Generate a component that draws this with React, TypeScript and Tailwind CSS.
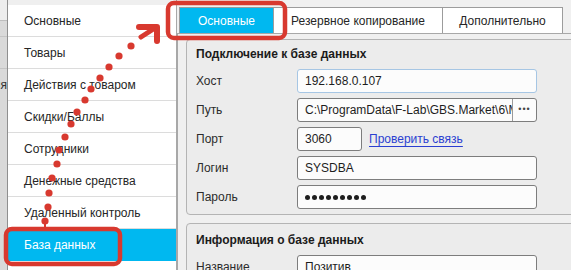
import React from 'react';

const menu = [
  'Основные',
  'Товары',
  'Действия с товаром',
  'Скидки/Баллы',
  'Сотрудники',
  'Денежные средства',
  'Удаленный контроль',
  'База данных',
];

const dots: [number, number][] = [
  [45, 221], [48, 207], [49, 193], [52, 178], [57, 164], [59, 150], [65, 137],
  [71, 124], [77, 112], [85, 100], [91, 89], [100, 78], [109, 67], [119, 56], [131, 46],
];

function Field({ label, children }: { label: string; children: React.ReactNode }) {
  return (
    <div className="flex items-center h-[24px] whitespace-nowrap">
      <div className="w-[101px] shrink-0 text-[12px] text-[#2b2b2b]">{label}</div>
      {children}
    </div>
  );
}

function Input({ value, narrow = false, focus = false }: { value: string; narrow?: boolean; focus?: boolean }) {
  return (
    <div
      className={`h-[24px] shrink-0 flex items-center pl-[7px] bg-[#fcfcfc] border rounded-[3px] text-[12px] text-[#1e1e1e] ${
        narrow ? 'w-[65px]' : 'w-[240px]'
      } ${focus ? 'border-[#a6c6e4]' : 'border-[#7d7d7d]'}`}
    >
      {value}
    </div>
  );
}

export default function App() {
  return (
    <div className="relative w-[571px] h-[270px] overflow-hidden flex bg-[#f0f0f0] font-['Liberation_Sans',Arial,sans-serif]">
      {/* window behind */}
      <div className="w-[8px] shrink-0 flex flex-col bg-[#d9d9d9] border-r border-[#8f8f8f] overflow-hidden">
        <div className="h-[21px] shrink-0 bg-[#ededed] border-b border-[#bdbdbd]" />
        <div className="h-[16px] shrink-0 border-b border-[#c4c4c4]" />
        <div className="h-[32px] shrink-0 border-b border-[#c4c4c4]" />
        <div className="h-[32px] shrink-0 flex items-center justify-end text-[12px] text-[#333] whitespace-nowrap">ия</div>
      </div>

      {/* sidebar */}
      <div className="w-[169px] shrink-0 flex flex-col border-r border-[#a8a8a8]">
        <div className="h-[5px] shrink-0 bg-[#efefef]" />
        <div className="flex-1 flex flex-col bg-white">
          {menu.map((m, i) => (
            <div
              key={m}
              className={`h-[32px] shrink-0 flex items-center pl-[16px] text-[12px] border-b ${
                i === 7 ? 'bg-[#00b8f0] text-white border-[#00b8f0]' : 'text-[#262626] border-[#dcdcdc]'
              }`}
            >
              {m}
            </div>
          ))}
        </div>
      </div>

      {/* main */}
      <div className="flex-1 flex flex-col min-w-0">
        <div className="flex pt-[7px] pl-[2px] h-[33px] shrink-0">
          <div className="w-[95px] flex items-center justify-center bg-[#00b8f0] text-white text-[12px] border border-[#9c9c9c] border-b-0">
            Основные
          </div>
          <div className="w-[169px] flex items-center justify-center bg-white text-[#262626] text-[12px] border-t border-r border-[#9c9c9c]">
            Резервное копирование
          </div>
          <div className="w-[120px] flex items-center justify-center bg-white text-[#262626] text-[12px] border-t border-r border-[#9c9c9c]">
            Дополнительно
          </div>
        </div>
        <div className="flex-1 border-t border-l border-[#a8a8a8] bg-[#f0f0f0] pl-[8px] pt-[5px] flex flex-col">
          <div className="w-[430px] shrink-0 border border-[#b4b4b4] rounded-[4px] bg-[#ececec] pl-[9px] pt-[5px] pb-[5px] flex flex-col">
            <div className="h-[18px] flex items-center text-[12px] font-bold text-[#1b1b1b]">Подключение к базе данных</div>
            <div className="mt-[6px] flex flex-col gap-[5px]">
              <Field label="Хост">
                <Input value="192.168.0.107" focus />
              </Field>
              <Field label="Путь">
                <div className="h-[24px] w-[240px] shrink-0 flex bg-[#fcfcfc] border border-[#7d7d7d] rounded-[3px] text-[12px] text-[#1e1e1e]">
                  <div className="flex-1 min-w-0 flex items-center pl-[7px] overflow-hidden">C:\ProgramData\F-Lab\GBS.Market\6\M</div>
                  <div className="w-[24px] shrink-0 border-l border-[#9a9a9a] flex items-center justify-center text-[9px] tracking-[1px] text-[#444]">•••</div>
                </div>
              </Field>
              <Field label="Порт">
                <Input value="3060" narrow />
                <span className="ml-[7px] text-[12px] text-[#2b3fd1] underline underline-offset-[3px]">Проверить связь</span>
              </Field>
              <Field label="Логин">
                <Input value="SYSDBA" />
              </Field>
              <Field label="Пароль">
                <div className="h-[24px] w-[240px] shrink-0 flex items-center pl-[7px] gap-[2px] bg-[#fcfcfc] border border-[#7d7d7d] rounded-[3px]">
                  {Array.from({ length: 9 }).map((_, i) => (
                    <span key={i} className="w-[5px] h-[5px] rounded-full bg-[#1e1e1e]" />
                  ))}
                </div>
              </Field>
            </div>
          </div>
          <div className="mt-[8px] w-[430px] shrink-0 border border-[#b4b4b4] rounded-[4px] bg-[#ececec] pl-[9px] pt-[7px] pb-[5px] flex flex-col">
            <div className="h-[18px] flex items-center text-[12px] font-bold text-[#1b1b1b]">Информация о базе данных</div>
            <div className="mt-[6px] flex flex-col gap-[5px]">
              <Field label="Название">
                <Input value="Позитив" />
              </Field>
            </div>
          </div>
        </div>
      </div>

      {/* annotations */}
      <svg className="absolute inset-0 pointer-events-none" width="571" height="270" viewBox="0 0 571 270">
        <rect x="168" y="3" width="117" height="35" rx="6" fill="none" stroke="#d8392f" strokeWidth="4.5" />
        <rect x="6" y="229" width="114" height="35" rx="6" fill="none" stroke="#d8392f" strokeWidth="4.5" />
        <line x1="45" y1="221" x2="45" y2="229" stroke="#d8392f" strokeWidth="2" />
        {dots.map(([x, y], i) => (
          <circle key={i} cx={x} cy={y} r="3.6" fill="#d8392f" />
        ))}
        <path d="M141 37 L155 28" stroke="#d8392f" strokeWidth="5" strokeLinecap="round" />
        <path d="M139 27 L157 27 L157 41" fill="none" stroke="#d8392f" strokeWidth="6" strokeLinecap="round" strokeLinejoin="round" />
      </svg>
    </div>
  );
}
